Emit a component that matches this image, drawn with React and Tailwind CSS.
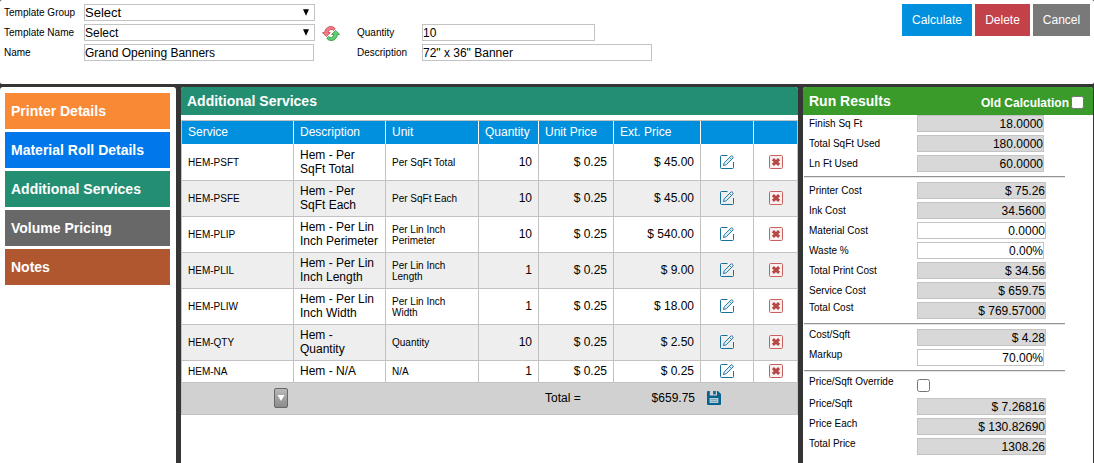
import React, { useState } from "react";
import clsx from "clsx";

const tabs = [
   { name: "Printer Details", color: "bg-[#f98935]" },
   { name: "Material Roll Details", color: "bg-[#0078eb]" },
   { name: "Additional Services", color: "bg-[#248e73]" },
   { name: "Volume Pricing", color: "bg-[#686868]" },
   { name: "Notes", color: "bg-[#b05730]" },
];

const services = [
   { code: "HEM-PSFT", desc: ["Hem - Per", "SqFt Total"], unit: ["Per SqFt Total"], qty: 10, price: "$ 0.25", ext: "$ 45.00" },
   { code: "HEM-PSFE", desc: ["Hem - Per", "SqFt Each"], unit: ["Per SqFt Each"], qty: 10, price: "$ 0.25", ext: "$ 45.00" },
   { code: "HEM-PLIP", desc: ["Hem - Per Lin", "Inch Perimeter"], unit: ["Per Lin Inch", "Perimeter"], qty: 10, price: "$ 0.25", ext: "$ 540.00" },
   { code: "HEM-PLIL", desc: ["Hem - Per Lin", "Inch Length"], unit: ["Per Lin Inch", "Length"], qty: 1, price: "$ 0.25", ext: "$ 9.00" },
   { code: "HEM-PLIW", desc: ["Hem - Per Lin", "Inch Width"], unit: ["Per Lin Inch", "Width"], qty: 1, price: "$ 0.25", ext: "$ 18.00" },
   { code: "HEM-QTY", desc: ["Hem -", "Quantity"], unit: ["Quantity"], qty: 10, price: "$ 0.25", ext: "$ 2.50" },
   { code: "HEM-NA", desc: ["Hem - N/A"], unit: ["N/A"], qty: 1, price: "$ 0.25", ext: "$ 0.25" },
];

const columns = "grid grid-cols-[112px_92px_93px_60px_75px_87px_53px_44px]";

const EditIcon = () => (
   <svg width="14" height="14" viewBox="0 0 14 14" fill="none" stroke="#176f9c">
      <path d="M7.5 .5H1.5Q.5 .5 .5 1.5V12.5Q.5 13.5 1.5 13.5H12.5Q13.5 13.5 13.5 12.5V7" />
      <path d="M3.4 10.6L4.2 7.8L11 1Q11.6 .5 12.2 1L13 1.8Q13.5 2.4 13 3L6.2 9.8Z" fill="#dcecf4" strokeWidth=".9" />
      <path d="M9.6 2.6L11.4 4.4" strokeWidth=".7" />
   </svg>
);

const DeleteIcon = () => (
   <svg width="14" height="14" viewBox="0 0 14 14">
      <rect x=".5" y=".5" width="13" height="13" rx="1.2" fill="#fbf0f0" stroke="#c4605f" />
      <path d="M3.9 4.1L10.1 9.9M10.1 4.1L3.9 9.9" stroke="#b84644" strokeWidth="3" />
   </svg>
);

const SaveIcon = () => (
   <svg width="14" height="14" viewBox="0 0 14 14">
      <path d="M1 0H2.8V4.6H10V0H11L14 3V13Q14 14 13 14H1Q0 14 0 13V1Q0 0 1 0Z" fill="#06628f" />
      <path d="M6.2 0H8.8V3.4H6.2Z" fill="#06628f" />
      <path d="M2.6 7H11.4V12H2.6Z" fill="#b9cfda" />
      <path d="M3.8 8.6H10.2M3.8 10.4H10.2" stroke="#5f95b0" strokeWidth=".8" />
   </svg>
);

const RefreshIcon = () => (
   <svg width="18" height="15" viewBox="0 0 18 15" strokeWidth=".7" strokeLinejoin="round">
      <path d="M.4 6.6H2.6C3 2.8 5.6 .5 8.8 .5C10.8 .5 12.4 1.4 13.2 2.8L11.4 4.4C9.6 2.6 6.6 3.6 6.2 6.6H8.4L4.4 10.6Z" fill="#ee7d84" stroke="#c8323f" />
      <path d="M17.6 8.4H15.4C15 12.2 12.4 14.5 9.2 14.5C7.2 14.5 5.6 13.6 4.8 12.2L6.6 10.6C8.4 12.4 11.4 11.4 11.8 8.4H9.6L13.6 4.4Z" fill="#5fd072" stroke="#1f8036" />
   </svg>
);

const Select = ({ value, big }) => (
   <div className="flex h-[17px] w-[231px] items-start justify-between border border-[#c3c3c3] pr-[5px]">
      <span className={clsx(big ? "text-[13px] leading-[15px]" : "text-[12px] leading-[16px]")}>{value}</span>
      <svg className="mt-1" width="6" height="7" viewBox="0 0 6 7">
         <path d="M0 .3H6L3 6.7Z" />
      </svg>
   </div>
);

const Field = ({ value, className }) => (
   <div className={clsx("h-[17px] border border-[#c3c3c3] text-[12px] leading-[16px]", className)}>{value}</div>
);

// one label + value line, "up" lifts the label for the rows that are top aligned
const Result = ({ label, value, editable, narrow, up }) => (
   <div className="flex h-5 pl-[6px]">
      <span className={clsx("w-[108px] text-[10px]", up ? "leading-[12px]" : "leading-[18px]")}>{label}</span>
      <Field
         value={value}
         className={clsx(
            "text-right",
            narrow ? "w-[127px]" : "w-[129px]",
            editable ? "bg-white" : "bg-[#d8d8d8]"
         )}
      />
   </div>
);

const Divider = () => (
   <div className="ml-px h-[2px] w-[261px] border-b border-t border-b-[#e6e6e6] border-t-[#929292]" />
);

const Checkbox = ({ checked, onChange }) => (
   <button
      type="button"
      onClick={onChange}
      className={clsx(
         "size-[13px] shrink-0 rounded-[2.5px] border border-[#767676]",
         checked ? "bg-[#0075ff]" : "bg-white"
      )}
   />
);

const App = () => {
   const [oldCalc, setOldCalc] = useState(false);
   const [override, setOverride] = useState(false);

   return (
      <div className="flex h-[463px] w-[1094px] flex-col overflow-hidden bg-[#353535] font-['Liberation_Sans',Arial,sans-serif] text-black">
         <header className="flex h-[84px] shrink-0 justify-between rounded-[2px] bg-white pl-1 pr-1 pt-1">
            <div className="flex">
               <div className="flex flex-col gap-[3px]">
                  <div className="flex h-[17px]">
                     <label className="w-20 text-[10px] leading-[18px]">Template Group</label>
                     <Select value="Select" big />
                  </div>
                  <div className="flex h-[17px]">
                     <label className="w-20 text-[10px] leading-[18px]">Template Name</label>
                     <Select value="Select" />
                  </div>
                  <div className="flex h-[17px]">
                     <label className="w-20 text-[10px] leading-[18px]">Name</label>
                     <Field value="Grand Opening Banners" className="w-[230px]" />
                  </div>
               </div>
               <div className="ml-[7px] mt-[22px]">
                  <RefreshIcon />
               </div>
               <div className="ml-[17px] mt-5 flex flex-col gap-[3px]">
                  <div className="flex h-[17px]">
                     <label className="w-[65px] text-[10px] leading-[18px]">Quantity</label>
                     <Field value="10" className="w-[173px]" />
                  </div>
                  <div className="flex h-[17px]">
                     <label className="w-[65px] text-[10px] leading-[18px]">Description</label>
                     <Field value={'72" x 36" Banner'} className="w-[230px]" />
                  </div>
               </div>
            </div>
            <div className="flex gap-[3px] text-[12px] text-white">
               <button className="h-8 w-[70px] bg-[#0090de]">Calculate</button>
               <button className="h-8 w-[55px] bg-[#c34148]">Delete</button>
               <button className="h-8 w-[57px] bg-[#797979]">Cancel</button>
            </div>
         </header>

         <main className="mt-[3px] flex min-h-0 flex-1 gap-[5px]">
            <nav className="flex w-[176px] shrink-0 flex-col gap-[3px] rounded-t-[3px] bg-white pl-[5px] pt-[6px]">
               {tabs.map((tab) => (
                  <button
                     key={tab.name}
                     className={clsx("h-9 w-[165px] pl-[6px] text-left text-[14px] font-bold text-white", tab.color)}
                  >
                     {tab.name}
                  </button>
               ))}
            </nav>

            <section className="w-[617px] shrink-0 overflow-hidden rounded-t-[3px] bg-white">
               <h2 className="h-7 bg-[#248e73] pl-[6px] text-[14px] font-bold leading-7 text-white">
                  Additional Services
               </h2>
               <div className="mt-[5px] border-l border-t border-[#c2c2c2] text-[12px]">
                  <div className={clsx(columns, "h-[23px] bg-[#0090de] leading-[22px] text-white")}>
                     {["Service", "Description", "Unit", "Quantity", "Unit Price", "Ext. Price", "", ""].map((title, i) => (
                        <div
                           key={i}
                           className="border-r border-white pl-[6px] last:border-[#c2c2c2]"
                        >
                           {title}
                        </div>
                     ))}
                  </div>
                  {services.map((row, i) => (
                     <div
                        key={row.code}
                        className={clsx(
                           columns,
                           "border-b border-[#c2c2c2] *:flex *:items-center *:border-r *:border-[#c2c2c2] *:px-[6px]",
                           i === 0 ? "h-[37px]" : row.desc.length > 1 ? "h-9 *:pb-px" : "h-[22px] *:pb-px",
                           i % 2 ? "bg-[#eeeeee]" : "bg-white"
                        )}
                     >
                        <div className="pt-px text-[10px]">{row.code}</div>
                        <div className="whitespace-pre leading-[14px]">{row.desc.join("\n")}</div>
                        <div className="whitespace-pre pt-px text-[10px] leading-[11px]">{row.unit.join("\n")}</div>
                        <div className="justify-end">{row.qty}</div>
                        <div className="justify-end">{row.price}</div>
                        <div className="justify-end">{row.ext}</div>
                        <div className="justify-center">
                           <EditIcon />
                        </div>
                        <div className="justify-center">
                           <DeleteIcon />
                        </div>
                     </div>
                  ))}
                  <div className="flex h-8 border-b border-r border-[#c2c2c2] bg-[#d1d1d1] leading-[30px]">
                     <button className="ml-[92px] mt-[5px] flex h-5 w-[14px] items-center justify-center rounded-[2px] border border-[#666] bg-linear-to-b from-[#b8b8b8] to-[#8c8c8c]">
                        <svg width="8" height="6" viewBox="0 0 8 6" fill="white">
                           <path d="M.5 0H7.5L4 6Z" />
                        </svg>
                     </button>
                     <div className="ml-[257px] w-[100px]">Total =</div>
                     <div className="w-[50px] text-right">$659.75</div>
                     <div className="ml-3 mt-2">
                        <SaveIcon />
                     </div>
                  </div>
               </div>
            </section>

            <section className="mr-px flex-1 overflow-hidden rounded-t-[3px] bg-white">
               <div className="flex h-7 items-center bg-[#3a9b2b] pl-[6px] pr-[9px] font-bold text-white">
                  <h2 className="flex-1 text-[14px]">Run Results</h2>
                  <span className="mr-[2px] pt-[3px] text-[12px]">Old Calculation</span>
                  <span className="flex pt-[2px]">
                     <Checkbox checked={oldCalc} onChange={() => setOldCalc(!oldCalc)} />
                  </span>
               </div>
               <Result label="Finish Sq Ft" value="18.0000" narrow />
               <Result label="Total SqFt Used" value="180.0000" narrow />
               <Result label="Ln Ft Used" value="60.0000" narrow />
               <div className="mb-1 mt-px">
                  <Divider />
               </div>
               <Result label="Printer Cost" value="$ 75.26" />
               <Result label="Ink Cost" value="34.5600" />
               <Result label="Material Cost" value="0.0000" editable />
               <Result label="Waste %" value="0.00%" editable narrow />
               <Result label="Total Print Cost" value="$ 34.56" />
               <Result label="Service Cost" value="$ 659.75" />
               <Result label="Total Cost" value="$ 769.57000" up />
               <div className="mb-1 mt-px">
                  <Divider />
               </div>
               <Result label="Cost/Sqft" value="$ 4.28" up />
               <Result label="Markup" value="70.00%" editable narrow up />
               <div className="mt-px">
                  <Divider />
               </div>
               <div className="flex h-[26px] pl-[6px]">
                  <span className="w-[108px] pt-[3px] text-[10px] leading-[14px]">Price/Sqft Override</span>
                  <div className="flex items-start pt-[7px]">
                     <Checkbox checked={override} onChange={() => setOverride(!override)} />
                  </div>
               </div>
               <Result label="Price/Sqft" value="$ 7.26816" up />
               <Result label="Price Each" value="$ 130.82690" up />
               <Result label="Total Price" value="1308.26" up />
            </section>
         </main>
      </div>
   );
};

export default App;
